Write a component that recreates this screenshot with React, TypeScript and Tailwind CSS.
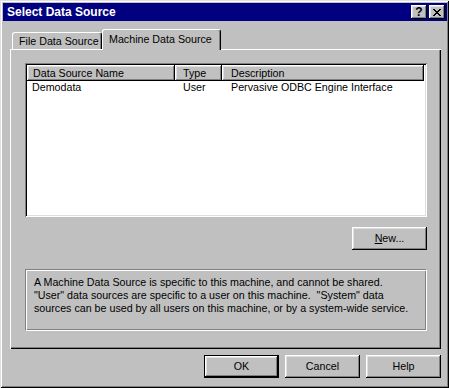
import React from "react";

const raised =
  "shadow-[inset_-1px_-1px_#000,inset_1px_1px_#fff,inset_-2px_-2px_#808080,inset_2px_2px_#dfdfdf]";
const sunken =
  "shadow-[inset_1px_1px_#808080,inset_-1px_-1px_#fff,inset_2px_2px_#000,inset_-2px_-2px_#dfdfdf]";

const columns = [
  { label: "Data Source Name", width: "w-[148px]", head: "pl-[6px]", cell: "pl-[5px]" },
  { label: "Type", width: "w-[47px]", head: "pl-[8px]", cell: "pl-[8px]" },
  { label: "Description", width: "w-[202px]", head: "pl-[9px]", cell: "pl-[9px]" },
];

const rows = [["Demodata", "User", "Pervasive ODBC Engine Interface"]];

function CloseGlyph() {
  // 8x7 pixel cross, two pixels wide per row
  const px: React.ReactElement[] = [];
  for (let i = 0; i < 7; i++) {
    px.push(<rect key={`a${i}`} x={i} y={i} width={2} height={1} />);
    px.push(<rect key={`b${i}`} x={6 - i} y={i} width={2} height={1} />);
  }
  return (
    <svg width="8" height="7" viewBox="0 0 8 7" shapeRendering="crispEdges" fill="#000">
      {px}
    </svg>
  );
}

function Button({ children, isDefault }: { children: React.ReactNode; isDefault?: boolean }) {
  return (
    <button
      className={`w-[75px] h-[23px] bg-[#c0c0c0] text-[10.7px] text-black flex items-center justify-center ${
        isDefault ? "border border-black" : ""
      } ${raised}`}
    >
      {children}
    </button>
  );
}

export default function App() {
  return (
    <div
      className={`w-[449px] h-[388px] bg-[#c0c0c0] pl-[3px] pt-[3px] pr-[2px] pb-[2px] font-['Liberation_Sans',Arial,sans-serif] text-black shadow-[inset_1px_1px_#dfdfdf,inset_-1px_-1px_#000,inset_2px_2px_#fff,inset_-2px_-2px_#808080]`}
    >
      {/* Title bar */}
      <div className="h-[18px] bg-[#000080] flex items-center justify-between pl-[4px] pr-[2px]">
        <span className="text-white font-bold text-[12px] leading-none">Select Data Source</span>
        <div className="flex gap-[2px]">
          <div className={`w-[16px] h-[14px] bg-[#c0c0c0] flex items-center justify-center ${raised}`}>
            <span className="font-bold text-[12px] leading-none -mt-px">?</span>
          </div>
          <div className={`w-[16px] h-[14px] bg-[#c0c0c0] flex items-center justify-center ${raised}`}>
            <CloseGlyph />
          </div>
        </div>
      </div>

      {/* Body */}
      <div className="pl-[7px] pt-[8px]">
        {/* Tabs */}
        <div className="flex items-end pl-[2px]">
          <div className="w-[90px] h-[17px] border-l border-t border-r border-l-white border-t-white border-r-black rounded-t-[3px] shadow-[inset_-1px_0_#808080] pl-[6px] pt-[2px] text-[10.7px] leading-[13px] whitespace-nowrap">
            File Data Source
          </div>
          <div className="relative z-10 -mb-px w-[119px] h-[21px] bg-[#c0c0c0] border-l border-t border-r border-l-white border-t-white border-r-black rounded-t-[3px] shadow-[inset_-1px_0_#808080] pl-[6px] pt-[3px] text-[10.7px] leading-[13px] whitespace-nowrap">
            Machine Data Source
          </div>
        </div>

        {/* Tab panel */}
        <div className="w-[431px] h-[300px] pl-[15px] pt-[14px] shadow-[inset_1px_1px_#fff,inset_-1px_-1px_#000,inset_-2px_-2px_#808080]">
          {/* List view */}
          <div className={`w-[402px] h-[154px] bg-white p-[2px] ${sunken}`}>
            <div className="flex">
              {columns.map((c) => (
                <div
                  key={c.label}
                  className={`${c.width} ${c.head} h-[16px] bg-[#c0c0c0] text-[10.7px] leading-[16px] ${raised}`}
                >
                  {c.label}
                </div>
              ))}
            </div>
            {rows.map((r) => (
              <div key={r[0]} className="flex h-[13px]">
                {r.map((v, i) => (
                  <div key={i} className={`${columns[i].width} ${columns[i].cell} text-[10.7px] leading-[13px]`}>
                    {v}
                  </div>
                ))}
              </div>
            ))}
          </div>

          <div className="w-[402px] flex justify-end mt-[10px]">
            <Button>
              <span>
                <span className="underline">N</span>ew...
              </span>
            </Button>
          </div>

          {/* Info box */}
          <div className="mt-[19px] w-[402px] h-[62px] border border-t-[#808080] border-l-[#808080] border-b-white border-r-white shadow-[inset_1px_1px_#fff,inset_-1px_-1px_#808080] pl-[8px] pt-[6px] text-[10.7px] leading-[13px] whitespace-pre">
            <div>A Machine Data Source is specific to this machine, and cannot be shared.</div>
            <div>"User" data sources are specific to a user on this machine.  "System" data</div>
            <div>sources can be used by all users on this machine, or by a system-wide service.</div>
          </div>
        </div>

        {/* Dialog buttons */}
        <div className="w-[431px] flex justify-end gap-[6px] mt-[6px]">
          <Button isDefault>OK</Button>
          <Button>Cancel</Button>
          <Button>Help</Button>
        </div>
      </div>
    </div>
  );
}
